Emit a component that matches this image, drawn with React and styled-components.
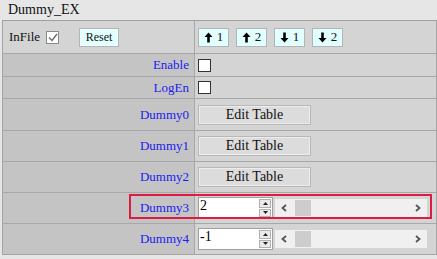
import React from 'react';
import styled, { createGlobalStyle } from 'styled-components';

const Global = createGlobalStyle`
   body {
      margin: 0;
      background: #e6e6e6;
   }
`;

const serif = `"Liberation Serif", "Times New Roman", "DejaVu Serif", serif`;

const Panel = styled.div`
   width: 437px;
   height: 259px;
   padding: 0 2px 0 2px;
   box-sizing: border-box;
   font-family: ${serif};
`;

const Title = styled.div`
   height: 20px;
   line-height: 19px;
   padding-left: 6px;
   font-size: 14px;
   color: #111;
`;

const Table = styled.div`
   width: 433px;
   border: 1px solid #a4a4a4;
   border-top-color: #a0a0a0;
   background: #d4d4d4;
`;

const Row = styled.div`
   position: relative;
   display: grid;
   grid-template-columns: 192px 1fr;
   height: ${(p) => p.h}px;
   border-top: ${(p) => (p.first ? 'none' : '1px solid #a8a8a8')};
`;

const Label = styled.div`
   background: ${(p) => (p.plain ? '#d4d4d4' : '#c4c4c4')};
   border-right: 1px solid #a8a8a8;
   display: flex;
   align-items: center;
   justify-content: ${(p) => (p.plain ? 'flex-start' : 'flex-end')};
   padding: ${(p) => (p.plain ? '0 0 0 6px' : '0 5px 0 0')};
   color: #2020f0;
   font-size: 13px;
   gap: 6px;
`;

const Value = styled.div`
   display: flex;
   align-items: center;
   padding-left: 3px;
   gap: 7px;
`;

const Highlight = styled.div`
   position: absolute;
   left: 126px;
   top: 1px;
   width: 303px;
   height: 25px;
   box-sizing: border-box;
   border: 2px solid #dc1c44;
   pointer-events: none;
`;

const InLabel = styled.span`
   color: #111;
   font-size: 13px;
`;

const Box = styled.span`
   width: 11px;
   height: 11px;
   border: 1px solid ${(p) => (p.checked ? '#8a8a8a' : '#333')};
   background: #fff;
   display: inline-flex;
   align-items: center;
   justify-content: center;
`;

const ResetButton = styled.button`
   margin-left: 14px;
   width: 40px;
   height: 19px;
   padding: 0;
   background: #e2ffff;
   border: 1px solid #b4b4b4;
   box-shadow: inset 0 0 0 1px #f0ffff;
   font-family: ${serif};
   font-size: 12px;
   color: #111;
`;

const MoveButton = styled.button`
   width: 31px;
   height: 19px;
   padding: 0;
   background: #e2ffff;
   border: 1px solid #b4b4b4;
   display: inline-flex;
   align-items: center;
   justify-content: center;
   gap: 4px;
   font-family: ${serif};
   font-size: 13px;
   color: #111;
`;

const EditButton = styled.button`
   width: 113px;
   height: 20px;
   padding: 0;
   background: #dcdcdc;
   border: 1px solid #b8b8b8;
   box-shadow: inset 0 0 0 1px #ececec;
   font-family: ${serif};
   font-size: 14px;
   color: #111;
`;

const NumField = styled.div`
   width: 75px;
   height: 22px;
   box-sizing: border-box;
   border: 1px solid #a0a0a0;
   background: #fff;
   display: flex;
   align-items: stretch;
`;

const NumText = styled.span`
   flex: 1;
   font-size: 14px;
   line-height: 16px;
   padding-left: 1px;
   color: #000;
`;

const Spinner = styled.div`
   width: 12px;
   margin: 1px 1px 1px 0;
   display: flex;
   flex-direction: column;
   gap: 1px;
`;

const SpinButton = styled.span`
   flex: 1;
   background: #eaeaea;
   border: 1px solid #b0b0b0;
   display: flex;
   align-items: center;
   justify-content: center;
`;

const Slider = styled.div`
   width: 152px;
   height: 18px;
   background: #f0f0f0;
   display: flex;
   align-items: center;
   margin-left: -5px;
   padding: 0 6px;
   box-sizing: border-box;
`;

const Thumb = styled.span`
   width: 16px;
   height: 16px;
   background: #cdcdcd;
   margin-left: 8px;
`;

const Chevron = ({ dir }) => (
   <svg width="6" height="8" viewBox="0 0 6 8" style={{ marginLeft: dir === 'r' ? 'auto' : 0 }}>
      <path
         d={dir === 'r' ? 'M1 1 L4.5 4 L1 7' : 'M5 1 L1.5 4 L5 7'}
         fill="none"
         stroke="#555"
         strokeWidth="1.8"
      />
   </svg>
);

const Tri = ({ up }) => (
   <svg width="5" height="3" viewBox="0 0 5 3">
      <path d={up ? 'M0 3 L2.5 0 L5 3 Z' : 'M0 0 L2.5 3 L5 0 Z'} fill="#222" />
   </svg>
);

const Arrow = ({ up }) => (
   <svg width="9" height="11" viewBox="0 0 9 11" style={{ transform: up ? 'none' : 'rotate(180deg)' }}>
      <path d="M4.5 0.5 L8.5 5 L5.8 5 L5.8 10.5 L3.2 10.5 L3.2 5 L0.5 5 Z" fill="#000" />
   </svg>
);

const Check = () => (
   <svg width="10" height="9" viewBox="0 0 10 9">
      <path d="M1 4.5 L4 7.5 L9 1" fill="none" stroke="#666" strokeWidth="1.3" />
   </svg>
);

function NumberInput({ value }) {
   return (
      <>
         <NumField>
            <NumText>{value}</NumText>
            <Spinner>
               <SpinButton><Tri up /></SpinButton>
               <SpinButton><Tri /></SpinButton>
            </Spinner>
         </NumField>
         <Slider>
            <Chevron dir="l" />
            <Thumb />
            <Chevron dir="r" />
         </Slider>
      </>
   );
}

const rows = [
   { name: 'Enable', h: 22, kind: 'check' },
   { name: 'LogEn', h: 21, kind: 'check' },
   { name: 'Dummy0', h: 31, kind: 'table' },
   { name: 'Dummy1', h: 30, kind: 'table' },
   { name: 'Dummy2', h: 30, kind: 'table' },
   { name: 'Dummy3', h: 30, kind: 'num', value: '2', marked: true },
   { name: 'Dummy4', h: 30, kind: 'num', value: '-1' },
];

export default function App() {
   return (
      <Panel>
         <Global />
         <Title>Dummy_EX</Title>
         <Table>
            <Row h={32} first>
               <Label plain>
                  <InLabel>InFile</InLabel>
                  <Box checked><Check /></Box>
                  <ResetButton>Reset</ResetButton>
               </Label>
               <Value>
                  <MoveButton><Arrow up />1</MoveButton>
                  <MoveButton><Arrow up />2</MoveButton>
                  <MoveButton><Arrow />1</MoveButton>
                  <MoveButton><Arrow />2</MoveButton>
               </Value>
            </Row>
            {rows.map((r) => (
               <Row key={r.name} h={r.h}>
                  <Label>{r.name}</Label>
                  <Value>
                     {r.kind === 'check' && <Box />}
                     {r.kind === 'table' && <EditButton>Edit Table</EditButton>}
                     {r.kind === 'num' && <NumberInput value={r.value} />}
                  </Value>
                  {r.marked && <Highlight />}
               </Row>
            ))}
         </Table>
      </Panel>
   );
}
